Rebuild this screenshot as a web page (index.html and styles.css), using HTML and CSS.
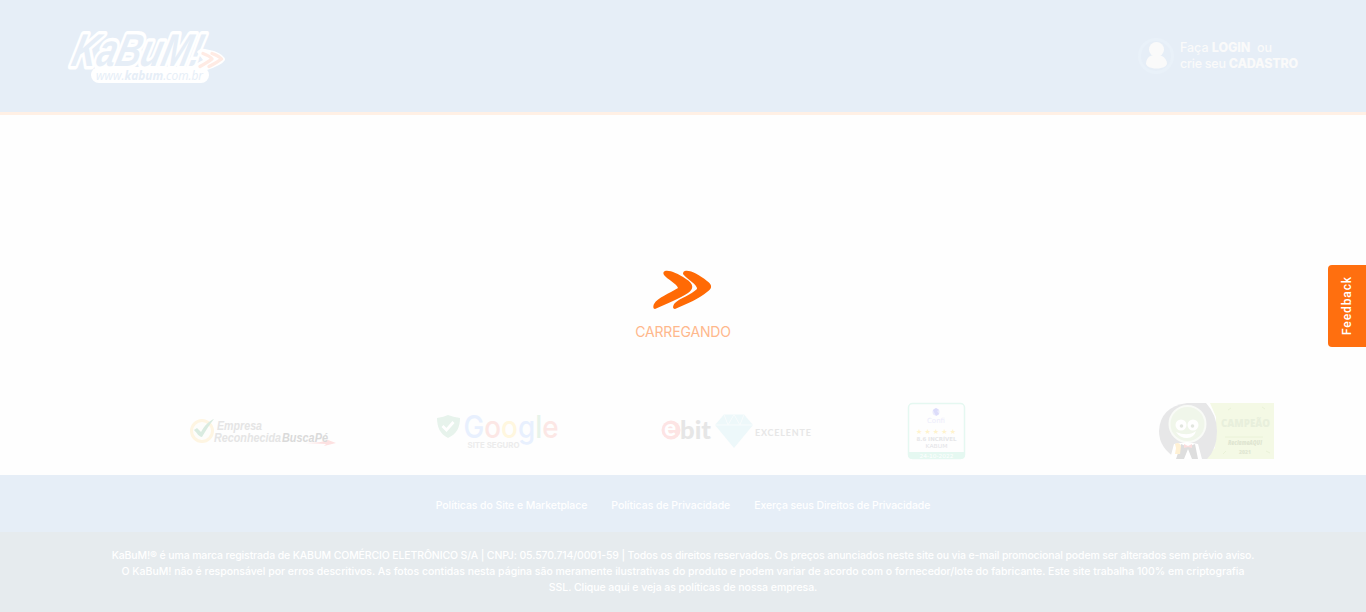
FILE: index.html
```html
<!DOCTYPE html>
<html lang="pt-BR">
<head>
<meta charset="utf-8">
<title>KaBuM!</title>
<link rel="stylesheet" href="styles.css">
</head>
<body>
<header class="header">
  <svg class="logo" width="164" height="60" viewBox="64 26 164 60">
    <rect x="91" y="67" width="118" height="16" rx="8" fill="#fff"/>
    <text class="logo-name" transform="translate(70 66) skewX(-14)" textLength="129" lengthAdjust="spacingAndGlyphs">KaBuM!</text>
    <path d="M197 52Q200 48 205 49L214 51Q225 55 225 60Q222 65 207 70H194L192 66L203 60Z" fill="#fff"/>
    <g fill="none" stroke="#ffebe4" stroke-width="3.400" stroke-linejoin="round" stroke-linecap="round"><path d="M203 53.500Q210 56 212 59Q208 62 200 66.500"/><path d="M212 53.500Q219 56 221.500 59Q217 62.500 209 66.500"/></g>
    <text class="logo-url" x="96" y="80" textLength="107" lengthAdjust="spacingAndGlyphs">www.<tspan font-weight="700">kabum</tspan>.com.br</text>
  </svg>
  <div class="account">
    <svg width="38" height="38" viewBox="0 0 38 38"><circle cx="19" cy="19" r="16.500" fill="none" stroke="#e9f1f9" stroke-width="3"/><circle cx="19.500" cy="12.500" r="7.500" fill="#fafafa"/><path d="M9 27C9 21 13 18.500 16 18.500H23C27 19 30 23 30 27C28 33 11 33 9 27Z" fill="#fafafa"/></svg>
    <div class="account-text"><div class="login">Faça <b>LOGIN</b>&nbsp; ou</div><div class="signup">crie seu <b>CADASTRO</b></div></div>
  </div>
</header>
<main class="loading">
  <svg width="60" height="40" viewBox="0 0 60 40" fill="#ff6a05"><path d="M12 1C17 0 24 3 33 9C41 14 41 19 35 23C27 28 14 34 2 39C0 39 0 36 1 34C5 27 16 24 25 18C24 14 14 9 11 5C10 3 10 2 12 1Z"/><path d="M32 1C38 0 46 5 54 11C60 15 59 19 54 22C47 28 34 34 22 39C19 39 20 35 22 33C27 28 38 25 44 19C45 15 34 9 30 4C30 2 31 1 32 1Z"/></svg>
  <div class="loading-text">CARREGANDO</div>
</main>
<section class="seals">
  <svg width="148" height="32" viewBox="189 414 148 32">
    <circle cx="202" cy="430" r="10.500" fill="#fdfdfb" stroke="#fef5e2" stroke-width="3"/>
    <path d="M194 429l3-2 4 4c4-7 8-11 13-13-4 5-8 11-12 18-3 0-5-4-8-7z" fill="#d9ebe0"/>
    <path d="M305 442Q322 442 328 439l8 3-12 3 2-2z" fill="#fde1e1"/>
    <g class="buscape"><text x="217" y="429" textLength="45" lengthAdjust="spacingAndGlyphs">Empresa</text><text x="214" y="440.500" textLength="67" lengthAdjust="spacingAndGlyphs">Reconhecida</text><text x="282" y="440.500" textLength="46" lengthAdjust="spacingAndGlyphs" fill="#dadada">BuscaPé</text></g>
  </svg>
  <svg width="124" height="38" viewBox="436 412 124 38">
    <path d="M437 418Q444 417 448 415Q453 417 460 418C460 427 457 434 448 438C440 434 437 427 437 418Z" fill="#e7f3ec"/><path d="M442.500 426l4 4 7-8" fill="none" stroke="#fff" stroke-width="2.800"/>
    <text class="google" x="463.500" y="437.500" textLength="95" lengthAdjust="spacingAndGlyphs"><tspan fill="#e8f0fe">G</tspan><tspan fill="#fce7e5">o</tspan><tspan fill="#fff7df">o</tspan><tspan fill="#e8f0fe">g</tspan><tspan fill="#e7f3ea">l</tspan><tspan fill="#fce7e5">e</tspan></text>
    <text class="safe" x="467.500" y="447.500" textLength="52" lengthAdjust="spacingAndGlyphs">SITE SEGURO</text>
  </svg>
  <svg width="152" height="38" viewBox="661 412 152 38">
    <circle cx="671" cy="430" r="9.500" fill="#fde4e4"/>
    <text class="ebit" x="664.200" y="436" font-size="22" fill="#fff" textLength="13.500">e</text>
    <text class="ebit" x="680" y="439" font-size="25" fill="#e6e6e6" textLength="31" lengthAdjust="spacingAndGlyphs">bit</text>
    <path d="M724 414.500H744L753 425L734 448L715 425Z" fill="#edf8fa"/><path d="M715 425h38M724 414.500l4 10.500 6-10.500 6 10.500 4-10.500" fill="none" stroke="#f8fcfd" stroke-width="1"/>
    <text class="excellent" x="755" y="436" textLength="56">EXCELENTE</text>
  </svg>
  <svg width="58" height="58" viewBox="907 402 58 58">
    <rect x="908.500" y="403.500" width="56" height="55" rx="4" fill="#fefefe" stroke="#e5f8f1" stroke-width="1.500"/><path d="M908 452h57v3q0 4-4 4h-49q-4 0-4-4z" fill="#e5f8f1"/>
    <circle cx="936" cy="412" r="3.500" fill="#ebebfc"/><path d="M933 410l3-2 3 2-2 1 2 3-3 2z" fill="#dcdcfa"/>
    <g text-anchor="middle" class="confi"><text x="936" y="423" font-size="7" fill="#ececfb">Confi</text><text x="936" y="433.500" font-size="7" fill="#fff3cc" textLength="40">★★★★★</text><text x="936.500" y="440.500" font-size="5.500" font-weight="700" fill="#e6e6e8" textLength="40" lengthAdjust="spacingAndGlyphs">8.6 INCRÍVEL</text><text x="936.500" y="448" font-size="5.500" fill="#e3e3e6" textLength="22" lengthAdjust="spacingAndGlyphs">KABUM</text><text x="936.500" y="457.500" font-size="5.500" fill="#fff" textLength="34" lengthAdjust="spacingAndGlyphs">24-10-2022</text></g>
  </svg>
  <svg width="116" height="58" viewBox="1158 402 116 58">
    <path d="M1200 403H1274V459H1200z" fill="#f4f9e5"/><path d="M1210 403l6 14-1 31-13 11h-15v-56z" fill="#fff"/>
    <path d="M1187 403H1206Q1217 415 1217 431Q1217 449 1207 459H1178Q1159 449 1159 431Q1160 407 1187 403Z" fill="#e7e7e8"/>
    <circle cx="1187.500" cy="424" r="18" fill="#f0f6ea" stroke="#f9fbf7" stroke-width="2"/>
    <g fill="#fff"><circle cx="1181" cy="425" r="5.500"/><circle cx="1193" cy="425" r="5.500"/><path d="M1176 432q12 5 20-1-2 7-9 7-7 0-11-6z"/><path d="M1174 444l13-2 11 2 4 15h-32z"/></g>
    <circle cx="1181.500" cy="426" r="1.800" fill="#e2e6df"/><circle cx="1192.500" cy="426" r="1.800" fill="#e2e6df"/>
    <path d="M1181 444l7 3 7-3 3 15h-6l-4-10-4 10h-8z" fill="#dedede"/><path d="M1184 444l4 2 4-2v4l-4-1-4 1z" fill="#fbdede"/><path d="M1175 444q4-3 6 2l-1 8h-5l1-6z" fill="#fff1d4"/>
    <g class="champion"><text x="1221" y="427" font-size="10.500" textLength="49" lengthAdjust="spacingAndGlyphs">CAMPEÃO</text><text x="1228" y="445" font-size="6" font-style="italic" fill="#dfe5d1" textLength="34" lengthAdjust="spacingAndGlyphs">ReclameAQUI</text><text x="1239" y="453.500" font-size="5.500" fill="#e1e7d3" textLength="12" lengthAdjust="spacingAndGlyphs">2021</text></g>
    <path d="M1225 437h38M1228 410l3-2M1262 407l3 2M1223 454l3-3M1266 451l4 2" stroke="#eaf2d8" stroke-width="1"/>
  </svg>
</section>
<nav class="links"><a class="market">Políticas do Site e Marketplace</a><a class="privacy">Políticas de Privacidade</a><a class="rights">Exerça seus Direitos de Privacidade</a></nav>
<footer class="legal">
  <div class="line-one">KaBuM!® é uma marca registrada de KABUM COMÉRCIO ELETRÔNICO S/A | CNPJ: 05.570.714/0001-59 | Todos os direitos reservados. Os preços anunciados neste site ou via e-mail promocional podem ser alterados sem prévio aviso.</div>
  <div class="line-two">O KaBuM! não é responsável por erros descritivos. As fotos contidas nesta página são meramente ilustrativas do produto e podem variar de acordo com o fornecedor/lote do fabricante. Este site trabalha 100% em criptografia</div>
  <div class="line-three">SSL. Clique aqui e veja as políticas de nossa empresa.</div>
</footer>
<aside class="feedback"><span>Feedback</span></aside>
</body>
</html>
```
FILE: styles.css
```css
* { box-sizing: border-box; }
body { margin: 0; height: 612px; overflow: hidden; background: #fefefe; font-family: Inter, "Liberation Sans", sans-serif; }
svg { display: block; flex: none; overflow: visible; }
.header { height: 115px; padding: 0 66px 3px 64px; display: flex; align-items: center; justify-content: space-between; background: #e6eef7; border-bottom: 3px solid #fff0e5; }
.logo-name { font: italic 700 46px "Liberation Sans", sans-serif; fill: #e6eef7; stroke: #fff; stroke-width: 7px; stroke-linejoin: round; paint-order: stroke; }
.logo-url { font: italic 12.500px "Open Sans", sans-serif; fill: #e6eef7; }
.logo { margin-top: 2px; }
.account { display: flex; gap: 6px; width: 162px; padding-top: 2px; color: #fafafa; }
.account-text { padding-top: 3px; font-size: 12.500px; font-weight: 500; line-height: 16px; white-space: nowrap; margin-left: -1px; }
.account svg { margin-left: -1px; }
.account-text b { font-weight: 800; }
.login { letter-spacing: -.05px; }
.signup { letter-spacing: -.24px; }
.loading { height: 272px; padding-top: 155px; display: flex; flex-direction: column; align-items: center; }
.loading-text { margin-top: 12px; font-size: 14px; line-height: 20px; color: #ffb88c; letter-spacing: -.15px; }
.seals { height: 88px; padding-left: 189px; display: grid; grid-template-columns: 247px 225px 246px 251px 116px; align-items: center; background: #fefefe; }
.buscape { font: italic 700 12px "Liberation Sans", sans-serif; fill: #e5e5e5; }
.google { font: 500 31px Inter, sans-serif; }
.safe { font: 700 7.500px Inter, sans-serif; fill: #ececec; }
.ebit { font-family: Lato, sans-serif; font-weight: 900; }
.excellent { font: 700 9px Lato, sans-serif; fill: #e7e7e7; }
.confi { font-family: "DejaVu Sans", sans-serif; }
.champion { font-family: "Open Sans", sans-serif; font-weight: 800; fill: #e8efdc; }
.links { height: 57px; padding-top: 4px; display: flex; align-items: center; justify-content: center; gap: 24px; background: #e6eef7; color: #fff; font-size: 10.500px; font-weight: 500; white-space: nowrap; }
.market { letter-spacing: -.08px; }
.privacy { letter-spacing: -.04px; }
.rights { letter-spacing: -.1px; }
.legal { height: 80px; padding-top: 16px; background: #e6ebee; color: #fff; font-size: 10.500px; font-weight: 500; line-height: 16px; text-align: center; white-space: nowrap; }
.legal div { display: flex; justify-content: center; }
.line-one { letter-spacing: -.131px; }
.line-two { letter-spacing: -.01px; }
.line-three { letter-spacing: -.05px; }
.feedback { position: absolute; right: 0; top: 265px; width: 38px; height: 82px; background: #ff6f0f; border-radius: 4px 0 0 4px; display: flex; align-items: center; justify-content: center; color: #fff; }
.feedback span { writing-mode: vertical-rl; transform: rotate(180deg); font: 500 12px Roboto, sans-serif; letter-spacing: .9px; }
```
